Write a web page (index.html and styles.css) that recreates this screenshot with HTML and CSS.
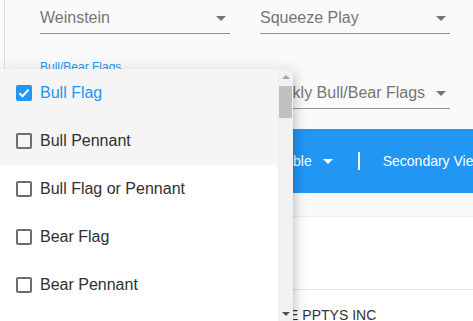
FILE: index.html
```html
<!DOCTYPE html>
<html lang="en">
<head>
    <meta charset="UTF-8">
    <meta name="viewport" content="width=device-width, initial-scale=1.0">
    <title>Pattern Scanner</title>
    <link rel="stylesheet" href="styles.css">
</head>
<body>
    <div class="page">
        <div class="filters">
            <div class="row">
                <div class="select"><span class="value">Weinstein</span><span class="caret"></span></div>
                <div class="select"><span class="value">Squeeze Play</span><span class="caret"></span></div>
            </div>
            <div class="row row-second">
                <div class="field">
                    <label class="field-label">Bull/Bear Flags</label>
                    <div class="select"><span class="value">Bull Flag</span><span class="caret"></span></div>
                </div>
                <div class="field">
                    <div class="select"><span class="value">Weekly Bull/Bear Flags</span><span class="caret"></span></div>
                </div>
            </div>
        </div>

        <div class="toolbar">
            <div class="tab">Data Table <span class="caret caret-white"></span></div>
            <span class="divider"></span>
            <div class="tab">Secondary View</div>
        </div>

        <div class="strip"></div>

        <div class="results">
            <div class="results-head"></div>
            <div class="results-row"><span class="cell">CORE PPTYS INC</span></div>
        </div>
    </div>

    <!-- open dropdown of the Bull/Bear Flags select -->
    <div class="menu">
        <ul class="menu-list">
            <li class="option selected"><span class="box checked"><svg viewBox="0 0 16 16" width="16" height="16"><path d="M3.5 8.2l3 3 6-6.4" fill="none" stroke="#fff" stroke-width="2"/></svg></span>Bull Flag</li>
            <li class="option focused"><span class="box"></span>Bull Pennant</li>
            <li class="option"><span class="box"></span>Bull Flag or Pennant</li>
            <li class="option"><span class="box"></span>Bear Flag</li>
            <li class="option"><span class="box"></span>Bear Pennant</li>
            <li class="option"><span class="box"></span>Bear Flag or Pennant</li>
            <li class="option"><span class="box"></span>Ascending Triangle</li>
            <li class="option"><span class="box"></span>Descending Triangle</li>
        </ul>
        <div class="scrollbar">
            <span class="scroll-btn"><span class="arrow arrow-up"></span></span>
            <div class="scroll-track"><span class="scroll-thumb"></span></div>
            <span class="scroll-btn"><span class="arrow arrow-down"></span></span>
        </div>
    </div>
</body>
</html>
```

FILE: styles.css
```css
html, body {
    height: 100%;
}

body {
    margin: 0;
    overflow: hidden;
    font-family: "Liberation Sans", Arial, sans-serif;
    font-size: 16px;
    color: #303030;
    background: #fafafa;
}

.page {
    margin-left: 4px;
    min-height: 100%;
    border-left: 1px solid #dcdcdc;
    background: #fafafa;
}

.filters {
    padding-left: 35px;
}

.row {
    display: flex;
    align-items: flex-end;
    gap: 30px;
}

.row-second {
    padding-top: 26px;
}

.select {
    display: flex;
    align-items: center;
    width: 190px;
    padding: 6px 0 3px;
    line-height: 24px;
    border-bottom: 1px solid #949494;
}

.field .select {
    padding-top: 7px;
}

.select .value {
    flex: 1;
    color: #757575;
    white-space: nowrap;
}

.field-label {
    display: block;
    font-size: 12px;
    line-height: 14px;
    color: #2196F3;
}

.caret {
    flex: none;
    width: 0;
    height: 0;
    margin-right: 4px;
    border-left: 5px solid transparent;
    border-right: 5px solid transparent;
    border-top: 5px solid #757575;
}

.caret-white {
    margin: 0 0 0 11px;
    border-top-color: #fff;
}

.toolbar {
    display: flex;
    align-items: center;
    height: 64px;
    margin-top: 20px;
    padding-left: 240px;
    background: #2196F3;
    color: #fff;
    font-size: 14px;
    white-space: nowrap;
}

.tab {
    display: flex;
    flex: none;
    align-items: center;
}

.divider {
    flex: none;
    width: 2px;
    height: 18px;
    margin: 0 23px 0 25px;
    background: #fff;
}

.strip {
    height: 23px;
    border-bottom: 1px solid #ededed;
    background: #f9f9f9;
}

.results {
    background: #fff;
}

.results-head {
    height: 72px;
    border-bottom: 1px solid #e0e0e0;
}

.results-row {
    padding: 15px 0 0 253px;
    font-size: 14px;
    line-height: 20px;
    color: #333;
    white-space: nowrap;
}

/* dropdown menu */
.menu {
    position: absolute;
    top: 69px;
    left: 0;
    display: flex;
    width: 293px;
    height: 252px;
    background: #fff;
    box-shadow: 0 5px 5px -3px rgba(0, 0, 0, 0.2), 0 8px 10px 1px rgba(0, 0, 0, 0.14), 0 3px 14px 2px rgba(0, 0, 0, 0.12);
}

.menu-list {
    flex: 1;
    margin: 0;
    padding: 0;
    list-style: none;
    overflow: hidden;
}

.option {
    display: flex;
    align-items: center;
    gap: 8px;
    height: 48px;
    padding-left: 16px;
    white-space: nowrap;
}

.option.selected,
.option.focused {
    background: #f5f5f5;
}

.option.selected {
    color: #2196F3;
}

.box {
    box-sizing: border-box;
    flex: none;
    width: 16px;
    height: 16px;
    border: 2px solid #6e6e6e;
    border-radius: 2px;
}

.box.checked {
    border: none;
    background: #2196F3;
}

.box svg {
    display: block;
}

.scrollbar {
    display: flex;
    flex-direction: column;
    width: 15px;
    background: #f1f1f1;
}

.scroll-btn {
    display: flex;
    align-items: center;
    justify-content: center;
    height: 15px;
}

.scroll-track {
    flex: 1;
    padding: 2px 1px 0;
}

.scroll-thumb {
    display: block;
    height: 32px;
    background: #c1c1c1;
}

.arrow {
    width: 0;
    height: 0;
    border-left: 4px solid transparent;
    border-right: 4px solid transparent;
}

.arrow-up {
    border-bottom: 4px solid #a3a3a3;
}

.arrow-down {
    border-top: 4px solid #505050;
}
```
